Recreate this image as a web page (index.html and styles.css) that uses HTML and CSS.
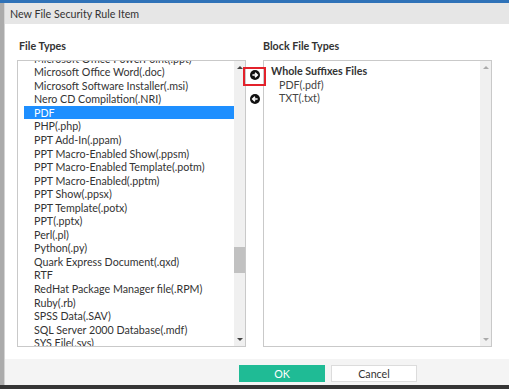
FILE: index.html
```html
<!DOCTYPE html>
<html lang="en">
<head>
    <meta charset="UTF-8">
    <title>New File Security Rule Item</title>
    <link rel="stylesheet" href="styles.css">
</head>
<body>
    <div class="top-bar"></div>
    <div class="screen">
        <div class="side-strip"></div>

        <!-- Dialog -->
        <div class="dialog">
            <div class="dialog-title">New File Security Rule Item</div>

            <div class="dialog-body">
                <div class="column">
                    <div class="column-head">File Types</div>
                    <div class="list-box">
                        <div class="list-view">
                            <ul class="list">
                                <li>Microsoft Office PowerPoint(.ppt)</li>
                                <li>Microsoft Office Word(.doc)</li>
                                <li>Microsoft Software Installer(.msi)</li>
                                <li>Nero CD Compilation(.NRI)</li>
                                <li class="selected">PDF</li>
                                <li>PHP(.php)</li>
                                <li>PPT Add-In(.ppam)</li>
                                <li>PPT Macro-Enabled Show(.ppsm)</li>
                                <li>PPT Macro-Enabled Template(.potm)</li>
                                <li>PPT Macro-Enabled(.pptm)</li>
                                <li>PPT Show(.ppsx)</li>
                                <li>PPT Template(.potx)</li>
                                <li>PPT(.pptx)</li>
                                <li>Perl(.pl)</li>
                                <li>Python(.py)</li>
                                <li>Quark Express Document(.qxd)</li>
                                <li>RTF</li>
                                <li>RedHat Package Manager file(.RPM)</li>
                                <li>Ruby(.rb)</li>
                                <li>SPSS Data(.SAV)</li>
                                <li>SQL Server 2000 Database(.mdf)</li>
                                <li>SYS File(.sys)</li>
                                <li>Text(.txt)</li>
                            </ul>
                        </div>
                        <div class="scrollbar">
                            <span class="scroll-up"></span>
                            <div class="track"><div class="thumb"></div></div>
                            <span class="scroll-down"></span>
                        </div>
                    </div>
                </div>

                <!-- Hinzufuegen / Entfernen -->
                <div class="move-buttons">
                    <span class="mark"></span>
                    <svg class="circle-btn" viewBox="0 0 10 10">
                        <circle cx="5" cy="5" r="5" fill="#111"/>
                        <path d="M2.4 5H7M5 2.7L7.3 5 5 7.3" stroke="#fff" stroke-width="1.6" fill="none"/>
                    </svg>
                    <svg class="circle-btn" viewBox="0 0 10 10">
                        <circle cx="5" cy="5" r="5" fill="#111"/>
                        <path d="M7.6 5H3M5 2.7L2.7 5 5 7.3" stroke="#fff" stroke-width="1.6" fill="none"/>
                    </svg>
                </div>

                <div class="column right">
                    <div class="column-head">Block File Types</div>
                    <div class="list-box">
                        <div class="list-view">
                            <div class="group">Whole Suffixes Files</div>
                            <div class="group-item">PDF(.pdf)</div>
                            <div class="group-item">TXT(.txt)</div>
                        </div>
                        <div class="scrollbar light">
                            <span class="scroll-up"></span>
                            <div class="track"></div>
                            <span class="scroll-down"></span>
                        </div>
                    </div>
                </div>
            </div>

            <div class="dialog-footer">
                <button class="btn ok">OK</button>
                <button class="btn cancel">Cancel</button>
            </div>
        </div>
    </div>
    <div class="bottom-bar"></div>
</body>
</html>
```

FILE: styles.css
```css
/* Seite */
body {
    margin: 0;
    width: 509px;
    height: 389px;
    overflow: hidden;
    font-family: 'Lato', 'Open Sans', sans-serif;
    font-size: 10.7px;
    color: #333;
    background-color: white;
}

.top-bar {
    height: 3px;
    background-color: #2f72b8;
}

.screen {
    display: flex;
    height: 382px;
}

.side-strip {
    width: 4px;
    background-color: #ababab;
    border-right: 1px solid #d4d4d4;
}

/* Dialog */
.dialog {
    flex: 1;
    display: flex;
    flex-direction: column;
}

.dialog-title {
    height: 21px;
    line-height: 21px;
    padding-left: 5px;
    background-color: #e6e6e6;
    color: #333;
}

.dialog-body {
    display: flex;
    padding: 14px 0 12px 12px;
}

.column {
    display: flex;
    flex-direction: column;
    width: 229px;
}

.column-head {
    height: 16px;
    line-height: 16px;
    margin-bottom: 6px;
    padding-left: 2px;
    font-weight: bold;
    color: #333;
}

.right .column-head {
    padding-left: 0;
}

.list-box {
    display: flex;
    height: 285px;
    border: 1px solid #c9c9c9;
    background-color: white;
}

.list-view {
    flex: 1;
    overflow: hidden;
}

.list {
    list-style: none;
    margin: -9.3px 0 0 0;
    padding: 0 0 0 6px;
}

.list li {
    height: 13.55px;
    line-height: 13.55px;
    padding-left: 10px;
    white-space: nowrap;
    color: #333;
}

.list li.selected {
    background-color: #1e8fff;
    color: white;
}

/* Scrollbalken */
.scrollbar {
    width: 11px;
    display: flex;
    flex-direction: column;
    align-items: center;
    background-color: #f0f0f0;
}

.scroll-up,
.scroll-down {
    width: 0;
    height: 0;
    border-left: 3px solid transparent;
    border-right: 3px solid transparent;
}

.scroll-up {
    margin-top: 5px;
    border-bottom: 3px solid #444;
}

.scroll-down {
    margin-bottom: 5px;
    border-top: 3px solid #444;
}

.light .scroll-up {
    border-bottom-color: #aaa;
}

.light .scroll-down {
    border-top-color: #aaa;
}

.track {
    flex: 1;
    align-self: stretch;
}

.thumb {
    margin-top: 178px;
    height: 26px;
    background-color: #c1c1c1;
}

/* Pfeil-Buttons */
.move-buttons {
    position: relative;
    width: 17px;
    display: flex;
    flex-direction: column;
    align-items: center;
    gap: 14px;
    padding-top: 32px;
}

.circle-btn {
    width: 10px;
    height: 10px;
}

.mark {
    position: absolute;
    left: -3px;
    top: 29px;
    width: 19px;
    height: 15px;
    border: 2px solid #e3212b;
}

.group {
    padding: 3px 0 0 7px;
    line-height: 13.5px;
    font-weight: bold;
    color: #333;
}

.group-item {
    padding-left: 15px;
    line-height: 13.5px;
    color: #444;
}

/* Fusszeile */
.dialog-footer {
    flex: 1;
    display: flex;
    gap: 6px;
    padding: 6px 0 0 234px;
    background-color: #f4f4f4;
}

.btn {
    width: 86px;
    height: 17px;
    padding: 0;
    font-family: 'Lato', sans-serif;
    font-size: 10.7px;
    border: 1px solid #dcdcdc;
}

.btn.ok {
    background-color: #1fbb95;
    border-color: #1fbb95;
    color: white;
}

.btn.cancel {
    background-color: white;
    color: #333;
}

.bottom-bar {
    height: 4px;
    background-color: #353535;
}
```
